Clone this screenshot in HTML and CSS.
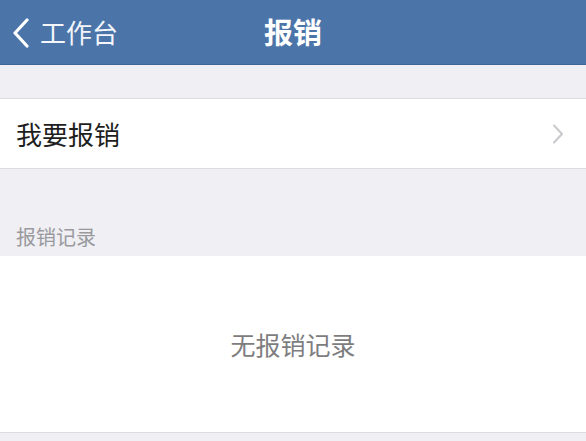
FILE: index.html
```html
<!DOCTYPE html>
<html lang="zh">
<head>
<meta charset="utf-8">
<link rel="stylesheet" href="styles.css">
</head>
<body>
<div class="page">
  <header class="nav">
    <div class="back">
      <svg class="back-icon" width="20" height="30" viewBox="0 0 20 30"><path d="M16 2 L4 15 L16 28" fill="none" stroke="#ffffff" stroke-width="3.2" stroke-linecap="round" stroke-linejoin="round"/></svg>
      <span class="back-text">工作台</span>
    </div>
    <h1 class="title">报销</h1>
  </header>
  <div class="gap-top"></div>
  <div class="row">
    <span class="row-text">我要报销</span>
    <svg class="chevron" width="12" height="20" viewBox="0 0 12 20"><path d="M2 1.5 L10 10 L2 18.5" fill="none" stroke="#c8c8cd" stroke-width="2" stroke-linecap="round" stroke-linejoin="round"/></svg>
  </div>
  <div class="section-label">报销记录</div>
  <div class="empty">无报销记录</div>
  <div class="bottom"></div>
</div>
</body>
</html>
```

FILE: styles.css
```css
* { box-sizing: border-box; margin: 0; padding: 0; }
html, body { width: 586px; height: 441px; overflow: hidden; }
body {
  background: #efeff4;
  font-family: "Noto Sans CJK SC", "Noto Sans", sans-serif;
}
.page { display: flex; flex-direction: column; height: 441px; }
.nav {
  height: 65px;
  background: #4b74a8;
  border-bottom: 1px solid #3f6496;
  position: relative;
  display: flex;
  align-items: center;
  justify-content: center;
  flex-shrink: 0;
}
.back {
  position: absolute;
  left: 11px;
  top: 0;
  height: 64px;
  display: flex;
  align-items: center;
  gap: 9px;
  color: #ffffff;
}
.back-icon { display: block; margin-top: 1px; }
.back-text { font-size: 26px; line-height: 1; color: #f4f6fb; }
.title {
  font-size: 29px;
  font-weight: 700;
  color: #ffffff;
  line-height: 1;
  margin-top: -1px;
}
.gap-top {
  height: 33px;
  background: #efeff4;
  border-top: 2px solid #f1eef6;
  flex-shrink: 0;
}
.row {
  height: 71px;
  background: #ffffff;
  border-top: 1px solid #dcdce0;
  border-bottom: 1px solid #dcdce0;
  display: flex;
  align-items: center;
  justify-content: space-between;
  padding: 0 22px 0 16px;
  flex-shrink: 0;
}
.row-text { font-size: 26px; color: #1e1e1e; line-height: 1; }
.chevron { display: block; }
.section-label {
  height: 87px;
  display: flex;
  align-items: flex-end;
  padding: 0 0 3px 16px;
  font-size: 20px;
  color: #9a9a9e;
  line-height: 1.6;
  flex-shrink: 0;
}
.empty {
  height: 177px;
  background: #ffffff;
  border-bottom: 1px solid #dcdce0;
  display: flex;
  align-items: center;
  justify-content: center;
  font-size: 25px;
  color: #7d7d80;
  flex-shrink: 0;
}
.bottom { flex: 1; background: #efeff4; }
```
